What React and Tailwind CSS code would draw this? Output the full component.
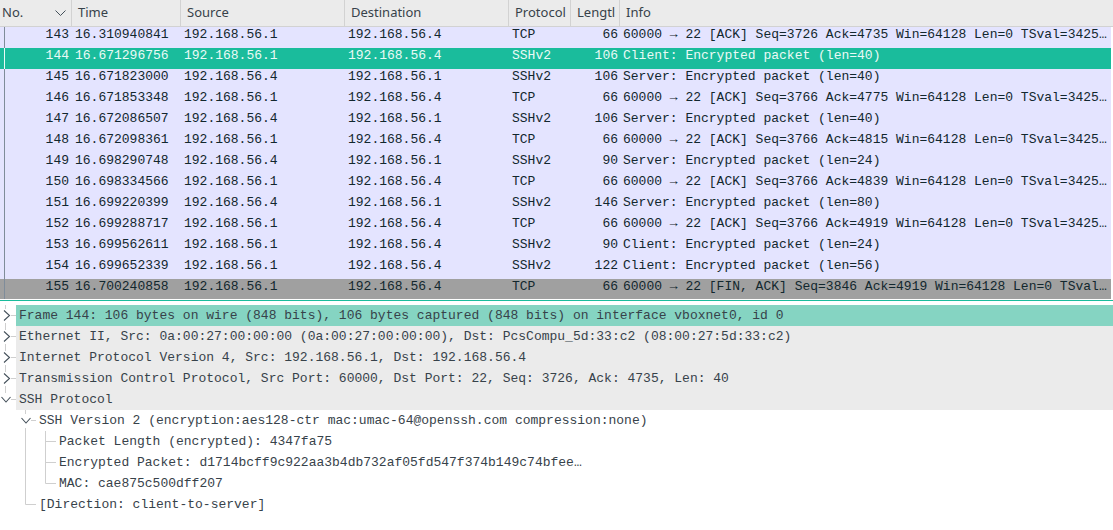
const packets = [
  ["143","16.310940841","192.168.56.1","192.168.56.4","TCP","66","60000 → 22 [ACK] Seq=3726 Ack=4735 Win=64128 Len=0 TSval=3425…"],
  ["144","16.671296756","192.168.56.1","192.168.56.4","SSHv2","106","Client: Encrypted packet (len=40)","sel"],
  ["145","16.671823000","192.168.56.4","192.168.56.1","SSHv2","106","Server: Encrypted packet (len=40)"],
  ["146","16.671853348","192.168.56.1","192.168.56.4","TCP","66","60000 → 22 [ACK] Seq=3766 Ack=4775 Win=64128 Len=0 TSval=3425…"],
  ["147","16.672086507","192.168.56.4","192.168.56.1","SSHv2","106","Server: Encrypted packet (len=40)"],
  ["148","16.672098361","192.168.56.1","192.168.56.4","TCP","66","60000 → 22 [ACK] Seq=3766 Ack=4815 Win=64128 Len=0 TSval=3425…"],
  ["149","16.698290748","192.168.56.4","192.168.56.1","SSHv2","90","Server: Encrypted packet (len=24)"],
  ["150","16.698334566","192.168.56.1","192.168.56.4","TCP","66","60000 → 22 [ACK] Seq=3766 Ack=4839 Win=64128 Len=0 TSval=3425…"],
  ["151","16.699220399","192.168.56.4","192.168.56.1","SSHv2","146","Server: Encrypted packet (len=80)"],
  ["152","16.699288717","192.168.56.1","192.168.56.4","TCP","66","60000 → 22 [ACK] Seq=3766 Ack=4919 Win=64128 Len=0 TSval=3425…"],
  ["153","16.699562611","192.168.56.1","192.168.56.4","SSHv2","90","Client: Encrypted packet (len=24)"],
  ["154","16.699652339","192.168.56.1","192.168.56.4","SSHv2","122","Client: Encrypted packet (len=56)"],
  ["155","16.700240858","192.168.56.1","192.168.56.4","TCP","66","60000 → 22 [FIN, ACK] Seq=3846 Ack=4919 Win=64128 Len=0 TSval…","fin"],
];

const Head = ({ w, children, last }) => (
  <div className={`${w} h-full flex items-center pl-[6px] shrink-0 overflow-hidden whitespace-nowrap ${last ? "grow" : "border-r border-[#d2d2d2]"}`}>
    {children}
  </div>
);

function Row({ p }) {
  const sel = p[7] === "sel";
  const fin = p[7] === "fin";
  const bg = sel ? "bg-[#1abc9c] text-[#eafaf6]" : fin ? "bg-[#a0a0a0] text-[#12272e]" : "bg-[#e4e4ff] text-[#12272e]";
  return (
    <div className={`flex w-[1111px] leading-[16px] whitespace-pre ${fin ? "h-[20px]" : "h-[21px]"} ${bg}`}>
      <div className="w-[72px] shrink-0 flex pl-[4px]">
        <div className={`w-px h-full ${sel ? "bg-[#eafaf6]" : "bg-[#7f8c9a]"}`} />
        <div className="grow text-right pr-[3px]">{p[0]}</div>
      </div>
      <div className="w-[109px] shrink-0 pl-[3px]">{p[1]}</div>
      <div className="w-[164px] shrink-0 pl-[3px]">{p[2]}</div>
      <div className="w-[164px] shrink-0 pl-[3px]">{p[3]}</div>
      <div className="w-[62px] shrink-0 pl-[3px]">{p[4]}</div>
      <div className="w-[49px] shrink-0 text-right pr-[2px]">{p[5]}</div>
      <div className="grow pl-[3px] overflow-hidden">{p[6]}</div>
    </div>
  );
}

const Chevron = ({ open, last }) => (
  <svg width="16" height="21" viewBox="0 0 16 21" className="shrink-0 block">
    <path d={last ? "M5.5 0V4" : "M5.5 0V4M5.5 18V21"} stroke="#cfcfcf" fill="none" />
    <path d="M11 10.5H16" stroke="#cfcfcf" fill="none" />
    <path
      d={open ? "M1.5 8 L6 13 L10.5 8" : "M4 5.5 L9.5 10.5 L4 15.5"}
      stroke="#44505a"
      fill="none"
      strokeWidth="1.1"
    />
  </svg>
);

const Top = ({ children, sel, open, last }) => (
  <div className="flex h-[21px]">
    <Chevron open={open} last={last} />
    <div className={`grow pl-[3px] whitespace-pre leading-[21px] ${sel ? "bg-[#85d4c2]" : "bg-[#ebebeb]"}`}>{children}</div>
  </div>
);

const Branch = ({ last }) => (
  <svg width="14" height="21" viewBox="0 0 14 21" className="shrink-0 block">
    <path d={last ? "M0.5 0V10.5H11" : "M0.5 0V21M0.5 10.5H11"} stroke="#cfcfcf" fill="none" />
  </svg>
);

const Leaf = ({ children, last }) => (
  <div className="flex h-[21px] pl-[25px]">
    <svg width="20" height="21" viewBox="0 0 20 21" className="shrink-0 block">
      <path d="M0.5 0V21" stroke="#cfcfcf" fill="none" />
    </svg>
    <Branch last={last} />
    <div className="whitespace-pre leading-[21px]">{children}</div>
  </div>
);

export default function App() {
  return (
    <div className="w-[1113px] h-[530px] overflow-hidden bg-white text-[13px] text-[#37424a] font-['Liberation_Mono',monospace]">
      <div className="h-[27px] flex bg-[#ebebeb] border-b border-[#d2d2d2] text-[#37424a] font-['Noto_Sans',sans-serif]">
        <div className="w-[72px] h-full flex items-center pl-[2px] justify-between pr-[5px] shrink-0 border-r border-[#d2d2d2]">
          <span>No.</span>
          <svg width="11" height="6" viewBox="0 0 11 6"><path d="M0.5 0.5 L5.5 5.5 L10.5 0.5" stroke="#44505a" fill="none" /></svg>
        </div>
        <Head w="w-[109px]">Time</Head>
        <Head w="w-[164px]">Source</Head>
        <Head w="w-[164px]">Destination</Head>
        <Head w="w-[62px]">Protocol</Head>
        <Head w="w-[49px]">Lengtl</Head>
        <Head w="w-0" last>Info</Head>
      </div>
      <div>
        {packets.map((p) => <Row key={p[0]} p={p} />)}
      </div>
      <div className="h-[6px] pt-[1px]">
        <div className="h-px bg-[#1abc9c]" />
      </div>
      <div>
        <Top sel>Frame 144: 106 bytes on wire (848 bits), 106 bytes captured (848 bits) on interface vboxnet0, id 0</Top>
        <Top>Ethernet II, Src: 0a:00:27:00:00:00 (0a:00:27:00:00:00), Dst: PcsCompu_5d:33:c2 (08:00:27:5d:33:c2)</Top>
        <Top>Internet Protocol Version 4, Src: 192.168.56.1, Dst: 192.168.56.4</Top>
        <Top>Transmission Control Protocol, Src Port: 60000, Dst Port: 22, Seq: 3726, Ack: 4735, Len: 40</Top>
        <Top open last>SSH Protocol</Top>
        <div className="flex h-[21px] pl-[20px]">
          <Chevron open />
          <div className="pl-[3px] whitespace-pre leading-[21px]">SSH Version 2 (encryption:aes128-ctr mac:umac-64@openssh.com compression:none)</div>
        </div>
        <Leaf>Packet Length (encrypted): 4347fa75</Leaf>
        <Leaf>Encrypted Packet: d1714bcff9c922aa3b4db732af05fd547f374b149c74bfee…</Leaf>
        <Leaf last>MAC: cae875c500dff207</Leaf>
        <div className="flex h-[21px] pl-[25px]">
          <svg width="14" height="21" viewBox="0 0 14 21" className="shrink-0 block"><path d="M0.5 0V10.5H11" stroke="#cfcfcf" fill="none" /></svg>
          <div className="whitespace-pre leading-[21px]">[Direction: client-to-server]</div>
        </div>
      </div>
    </div>
  );
}
